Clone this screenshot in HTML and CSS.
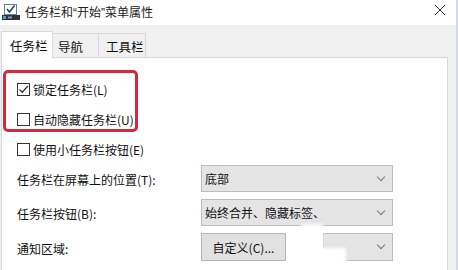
FILE: index.html
```html
<!DOCTYPE html>
<html lang="zh-CN">
<head>
<meta charset="utf-8">
<title>任务栏和"开始"菜单属性</title>
<link rel="stylesheet" href="styles.css">
</head>
<body>
<div class="window">
  <div class="titlebar">
    <svg class="app-icon" width="18" height="16" viewBox="0 0 18 16">
      <rect x="2.5" y="0.5" width="12" height="10" fill="#fff" stroke="#6d7f92"/>
      <path d="M5 5 L7.5 8 L12.5 1.5" fill="none" stroke="#1d3f73" stroke-width="1.6"/>
      <rect x="0" y="11" width="18" height="5" fill="#2b3340"/>
      <rect x="1" y="12" width="3" height="3" fill="#4f9be0"/>
      <rect x="6" y="12.5" width="4" height="2" fill="#8a96a6"/>
    </svg>
    <span class="title">任务栏和<span class="q">“</span>开始<span class="q">”</span>菜单属性</span>
    <svg class="close" width="12" height="12" viewBox="0 0 12 12">
      <path d="M1 1 L11 11 M11 1 L1 11" stroke="#333" stroke-width="1" fill="none"/>
    </svg>
  </div>
  <div class="body">
    <div class="tabs">
      <div class="tab active">任务栏</div>
      <div class="tab">导航</div>
      <div class="tab">工具栏</div>
    </div>
    <div class="panel">
      <div class="checks">
        <div class="check"><span class="box"><svg width="11" height="11" viewBox="0 0 11 11"><path d="M1.5 5.5 L4.3 8.3 L9.8 2" fill="none" stroke="#333" stroke-width="1.3"/></svg></span>锁定任务栏(L)</div>
        <div class="check"><span class="box"></span>自动隐藏任务栏(U)</div>
        <div class="check"><span class="box"></span>使用小任务栏按钮(E)</div>
      </div>
      <div class="form">
        <div class="label">任务栏在屏幕上的位置(T):</div>
        <div class="select">底部<span class="chev"></span></div>
        <div class="label">任务栏按钮(B):</div>
        <div class="select">始终合并、隐藏标签、<span class="chev"></span></div>
        <div class="label">通知区域:</div>
        <div class="split">
          <div class="button">自定义(C)...</div>
          <div class="select short"><span class="chev"></span></div>
        </div>
      </div>
    </div>
  </div>
  <div class="highlight"></div>
  <div class="smudge a"></div>
  <div class="smudge b"></div>
</div>
</body>
</html>
```

FILE: styles.css
```css
html, body {
  margin: 0;
  padding: 0;
  background: #fff;
}
body {
  font-family: "Noto Sans CJK SC", "Noto Sans", sans-serif;
  font-size: 12px;
  color: #1a1a1a;
}
.window {
  position: relative;
  width: 456px;
  height: 270px;
  overflow: hidden;
  border-right: 2px solid #cfdbea;
  background: #f0f0f0;
}
.titlebar {
  height: 25px;
  background: #fff;
  display: flex;
  align-items: center;
  padding-left: 2px;
}
.app-icon {
  margin-top: -2px;
}
.title {
  margin-left: 5px;
  font-size: 12px;
  line-height: 16px;
  color: #222;
  flex: 1;
  white-space: nowrap;
}
.q {
  font-family: "Liberation Sans", sans-serif;
}
.close {
  margin-right: 10px;
  margin-top: -5px;
}
.body {
  padding: 6px 8px 0 1px;
}
.tabs {
  display: flex;
  height: 26px;
  align-items: flex-end;
  position: relative;
  z-index: 1;
}
.tab {
  height: 24px;
  box-sizing: border-box;
  border: 1px solid #d9d9d9;
  border-bottom: none;
  background: #f0f0f0;
  line-height: 25px;
  color: #111;
  font-size: 12.5px;
  white-space: nowrap;
}
.tab + .tab {
  margin-left: -1px;
}
.tab.active {
  height: 27px;
  margin-bottom: -1px;
  background: #fff;
  line-height: 27px;
  width: 52px;
  padding-left: 8px;
}
.tab:nth-child(2) {
  width: 47px;
  padding-left: 5px;
}
.tab:nth-child(3) {
  width: 48px;
  padding-left: 7px;
}
.panel {
  background: #fff;
  border: 1px solid #d9d9d9;
  height: 240px;
  padding: 16px 0 0 15px;
}
.checks {
  display: flex;
  flex-direction: column;
}
.check {
  height: 30px;
  display: flex;
  align-items: center;
  color: #111;
  white-space: nowrap;
}
.box {
  width: 13px;
  height: 13px;
  box-sizing: border-box;
  border: 1px solid #333;
  background: #fff;
  margin-right: 3px;
  display: flex;
  align-items: center;
  justify-content: center;
}
.form {
  margin-top: 1px;
  display: grid;
  grid-template-columns: 184px 192px;
  row-gap: 7px;
}
.label {
  display: flex;
  align-items: center;
  padding-top: 2px;
  color: #111;
  white-space: nowrap;
}
.select {
  height: 27px;
  box-sizing: border-box;
  border: 1px solid #bdbdbd;
  background: #e4e4e4;
  display: flex;
  align-items: center;
  padding-left: 3px;
  position: relative;
  color: #111;
  white-space: nowrap;
}
.chev {
  position: absolute;
  right: 8px;
  top: 8px;
  width: 5px;
  height: 5px;
  border-right: 1.5px solid #7a7a7a;
  border-bottom: 1.5px solid #7a7a7a;
  transform: rotate(45deg);
}
.split {
  display: flex;
  justify-content: space-between;
}
.button {
  width: 85px;
  height: 28px;
  box-sizing: border-box;
  border: 1px solid #b5b5b5;
  background: #e1e1e1;
  display: flex;
  align-items: center;
  justify-content: center;
  color: #111;
  white-space: nowrap;
}
.select.short {
  width: 70px;
  height: 28px;
}
.highlight {
  position: absolute;
  left: 3px;
  top: 70px;
  width: 135px;
  height: 62px;
  box-sizing: border-box;
  border: 3px solid #d2293c;
  border-radius: 5px;
}
.smudge {
  position: absolute;
  background: #fff;
  filter: blur(1.5px);
}
.smudge.a {
  left: 301px;
  top: 224px;
  width: 22px;
  height: 50px;
}
.smudge.b {
  left: 318px;
  top: 248px;
  width: 28px;
  height: 26px;
}
```
